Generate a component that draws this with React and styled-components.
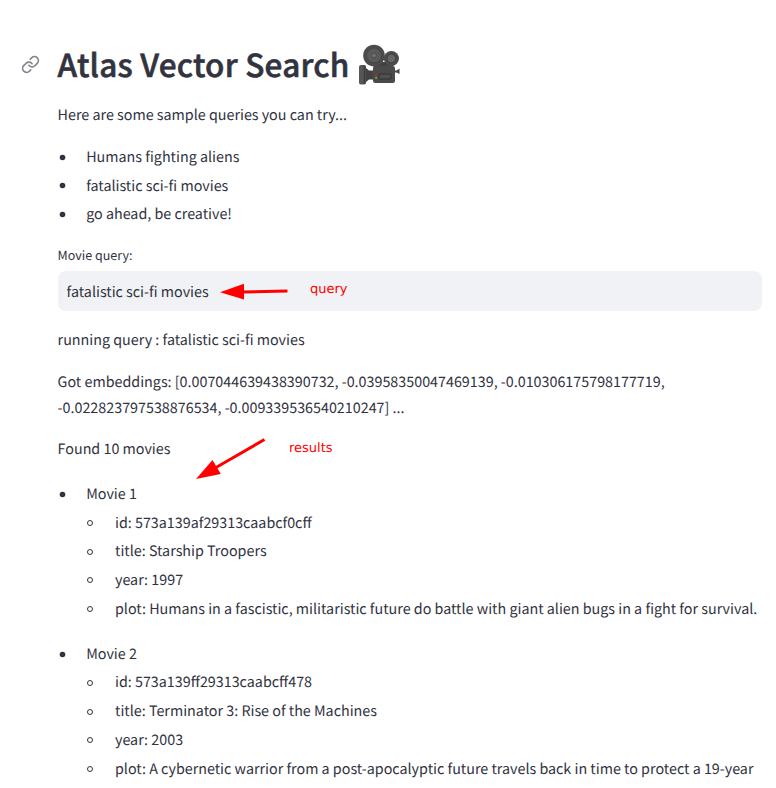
import React from "react";
import styled, { createGlobalStyle } from "styled-components";

const GlobalStyle = createGlobalStyle`
  *, *::before { box-sizing: border-box; }
  body { margin: 0; background: #fff; overflow: hidden; }
`;

const Page = styled.main`
  position: relative;
  height: 788px;
  overflow: hidden;
  padding: 35px 14px 0 57.6px;
  color: #31333f;
  font-family: "Noto Sans CJK SC", "Open Sans", sans-serif;
  font-size: 14.32px;
  line-height: 25.6px;
  text-rendering: geometricPrecision;
`;

const Header = styled.header`
  display: flex;
  align-items: center;
  height: 58px;
  margin-left: -37px;
`;

const AnchorIcon = styled.svg`
  width: 19px;
  height: 19px;
  margin: 1px 18px 0 0;
  flex: none;
`;

const Title = styled.h1`
  margin: 0;
  font-size: 31.5px;
  line-height: 42px;
  font-weight: 500;
  letter-spacing: 0.24px;
  -webkit-text-stroke: 0.6px #31333f;
  white-space: nowrap;
  width: 301px;
`;

const CameraIcon = styled.svg`
  width: 42px;
  height: 42px;
  margin-top: 2px;
  flex: none;
`;

const Paragraph = styled.p`
  margin: 0 0 16px;
  white-space: pre-line;
`;

const Intro = styled(Paragraph)`
  margin-top: 9.2px;
`;

const List = styled.ul`
  list-style: none;
  margin: 0;
  padding: 0;
  display: flex;
  flex-direction: column;
  gap: 3.2px;
`;

const Movies = styled(List)`
  margin-top: 19.12px;
  gap: 19.2px;
`;

const Item = styled.li`
  padding-left: 28.8px;
  white-space: nowrap;
`;

const Line = styled.div`
  display: flex;
  align-items: center;
  margin-left: -28.8px;

  &::before {
    content: "";
    flex: none;
    width: ${(p) => (p.$hollow ? 6 : 5)}px;
    height: ${(p) => (p.$hollow ? 6 : 5)}px;
    margin: 1px ${(p) => (p.$hollow ? 22.1 : 21.2)}px 0 ${(p) => (p.$hollow ? 0.5 : 2.4)}px;
    border: 1px solid #31333f;
    border-radius: 50%;
    background: ${(p) => (p.$hollow ? "transparent" : "#31333f")};
    box-shadow: ${(p) => (p.$hollow ? "none" : "0 0 0 0.3px #31333f")};
  }
`;

const Details = styled(List)`
  margin-top: 3.2px;
`;

const Label = styled.label`
  display: block;
  margin-top: 16px;
  font-size: 12.53px;
  line-height: 24px;
`;

const QueryField = styled.div`
  display: flex;
  align-items: center;
  height: 40px;
  margin: 4.2px 0 16.2px;
  padding: 1.6px 9px 0;
  border-radius: 8px;
  background: #f0f2f6;
`;

const Note = styled.span`
  position: absolute;
  left: ${(p) => p.$x}px;
  top: ${(p) => p.$y}px;
  color: #f00;
  font: 13px/16px "DejaVu Sans", sans-serif;
`;

const Arrows = styled.svg`
  position: absolute;
  left: 0;
  top: 0;
  pointer-events: none;
`;

const samples = ["Humans fighting aliens", "fatalistic sci-fi movies", "go ahead, be creative!"];

const movies = [
  {
    name: "Movie 1",
    details: [
      "id: 573a139af29313caabcf0cff",
      "title: Starship Troopers",
      "year: 1997",
      "plot: Humans in a fascistic, militaristic future do battle with giant alien bugs in a fight for survival.",
    ],
  },
  {
    name: "Movie 2",
    details: [
      "id: 573a139ff29313caabcff478",
      "title: Terminator 3: Rise of the Machines",
      "year: 2003",
      "plot: A cybernetic warrior from a post-apocalyptic future travels back in time to protect a 19-year",
    ],
  },
];

function Camera() {
  return (
    <CameraIcon viewBox="0 0 42 42" aria-label="Movie camera">
      <path d="M18 18h20l-5 5H14z" fill="#424242" />
      <path d="M35 26.5h2.5l3-2v5.5l-3-1.6H35z" fill="#484848" />
      <path d="M7 24l3 2.5h5v9h-5L7 38z" fill="#424242" />
      <rect x="0" y="21" width="7" height="19.5" rx="2" fill="#565656" />
      <path d="M5.5 21.5v18.5" stroke="#3d3d3d" strokeWidth="1.6" />
      <rect x="14" y="22" width="22" height="17" rx="2.5" fill="#4a4a4a" />
      <circle cx="15" cy="11.5" r="10.8" fill="#4c4c4c" />
      <circle cx="15" cy="11.5" r="7.6" fill="#5a5a5a" stroke="#444" strokeWidth="1" />
      <circle cx="15" cy="11.5" r="2.4" fill="#707070" stroke="#4c4c4c" />
      <circle cx="32.4" cy="14.5" r="7.6" fill="#4c4c4c" />
      <circle cx="32.4" cy="14.5" r="4.4" fill="#666" stroke="#3e3e3e" strokeWidth="1" />
      <rect x="20" y="30" width="12" height="5" rx=".5" fill="#505050" stroke="#303030" />
      <circle cx="17.2" cy="31.2" r="1.2" fill="#a02a30" />
      <circle cx="17.2" cy="33.8" r="1.1" fill="#57b52b" />
    </CameraIcon>
  );
}

export default function App() {
  return (
    <Page>
      <GlobalStyle />
      <Header>
        <AnchorIcon viewBox="0 0 24 24" fill="none" stroke="#83848c" strokeWidth="2.1" strokeLinecap="round" strokeLinejoin="round">
          <path d="M10 13a5 5 0 0 0 7.54.54l3-3a5 5 0 0 0-7.07-7.07l-1.72 1.71" />
          <path d="M14 11a5 5 0 0 0-7.54-.54l-3 3a5 5 0 0 0 7.07 7.07l1.71-1.71" />
        </AnchorIcon>
        <Title>Atlas Vector Search</Title>
        <Camera />
      </Header>
      <Intro>Here are some sample queries you can try...</Intro>
      <List>
        {samples.map((s) => (
          <Item key={s}><Line>{s}</Line></Item>
        ))}
      </List>
      <Label>Movie query:</Label>
      <QueryField>fatalistic sci-fi movies</QueryField>
      <Paragraph>running query : fatalistic sci-fi movies</Paragraph>
      <Paragraph>
        {"Got embeddings: [0.007044639438390732, -0.03958350047469139, -0.010306175798177719,\n-0.022823797538876534, -0.009339536540210247] ..."}
      </Paragraph>
      <Paragraph>Found 10 movies</Paragraph>
      <Movies>
        {movies.map((m) => (
          <Item key={m.name}>
            <Line>{m.name}</Line>
            <Details>
              {m.details.map((d) => (
                <Item key={d}><Line $hollow>{d}</Line></Item>
              ))}
            </Details>
          </Item>
        ))}
      </Movies>
      <Arrows width="776" height="788" fill="#f00" stroke="#f00">
        <path d="M242 292L287.5 291" strokeWidth="3" />
        <path d="M220 292.2L244 283.8V299.5z" stroke="none" />
        <path d="M216 467.5L264.5 439.5" strokeWidth="3" />
        <path d="M196 479L212.5 460L220.8 474z" stroke="none" />
      </Arrows>
      <Note $x={310} $y={282}>query</Note>
      <Note $x={289} $y={441}>results</Note>
    </Page>
  );
}
